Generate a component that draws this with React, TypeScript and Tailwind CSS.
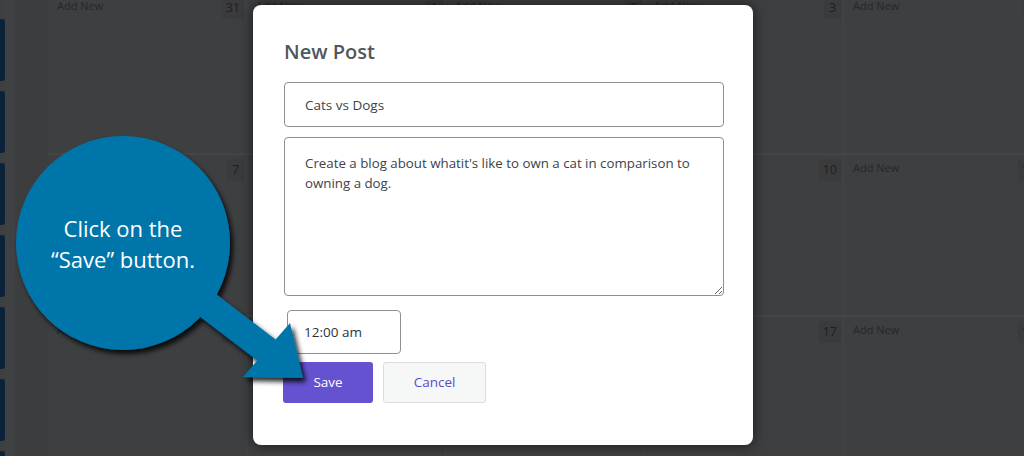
import React from "react";

const rows = [
  ["31", "1", "2", "3", "4"],
  ["7", "8", "9", "10", "11"],
  ["14", "15", "16", "17", "18"],
];

function Cell({ day }: { day: string }) {
  return (
    <div className="w-[199px] shrink-0 border-r border-[#444547] flex items-start justify-between pl-[9px] pr-[2px] pt-[4px]">
      <span className="text-[11px] leading-[18px] text-[#26272a]">Add New</span>
      <span className="min-w-[17px] h-[22px] px-[4px] bg-[#3a3b3d] text-[12.5px] leading-[22px] text-center text-[#1f2022]">
        {day}
      </span>
    </div>
  );
}

export default function App() {
  return (
    <div className="relative w-[1024px] h-[456px] overflow-hidden bg-[#3e3f41] font-['Open_Sans',sans-serif]">
      {/* background calendar */}
      <div className="flex h-full">
        <div className="w-[5px] shrink-0 flex flex-col gap-[10px] pt-[19px]">
          {[0, 1, 2, 3, 4, 5, 6].map((i) => (
            <div key={i} className="h-[62px] shrink-0 rounded-r-[3px] bg-[#0c2238]" />
          ))}
        </div>
        <div className="w-[10px] shrink-0 bg-[#404143]" />
        <div className="w-[33px] shrink-0 bg-[#3c3d3f]" />
        <div className="flex flex-col -mt-[7px]">
          {rows.map((r, i) => (
            <div key={i} className="flex h-[162px] shrink-0 border-b-2 border-[#444547]">
              {r.map((d) => (
                <Cell key={d} day={d} />
              ))}
            </div>
          ))}
        </div>
      </div>

      {/* modal */}
      <div className="absolute left-[253px] top-[5px] w-[500px] h-[440px] bg-white rounded-[8px] shadow-[0_0_14px_rgba(0,0,0,0.6)] pl-[31px] pr-[29px] pt-[33px]">
        <h2 className="text-[20px] font-semibold leading-[28px] text-[#50575e]">New Post</h2>
        <input
          readOnly
          value="Cats vs Dogs"
          className="mt-[16px] block w-full h-[45px] border border-[#8c8f94] rounded-[4px] px-[20px] text-[13.5px] text-[#3c434a] outline-none"
        />
        <textarea
          readOnly
          value={"Create a blog about whatit's like to own a cat in comparison to owning a dog."}
          className="mt-[10px] block w-full h-[159px] border border-[#8c8f94] rounded-[4px] px-[20px] py-[15px] text-[13.3px] leading-[20px] text-[#3c434a] outline-none resize"
        />
        <input
          readOnly
          value="12:00 am"
          className="mt-[14px] ml-[3px] block w-[114px] h-[44px] border border-[#8c8f94] rounded-[4px] px-[16px] text-[13.5px] text-[#2c3338] outline-none"
        />
        <div className="mt-[8px] -ml-[1px] flex gap-[10px]">
          <button className="w-[90px] h-[41px] rounded-[3px] bg-[#6552d0] text-white text-[13.5px]">Save</button>
          <button className="w-[103px] h-[41px] rounded-[3px] bg-[#f6f7f7] border border-[#dcdcde] text-[#5b49d1] text-[13.5px]">
            Cancel
          </button>
        </div>
      </div>

      {/* callout annotation */}
      <div className="absolute inset-0 pointer-events-none">
        <svg className="absolute left-0 top-0" width="1024" height="456">
          <defs>
            <filter id="sh" x="-20%" y="-20%" width="140%" height="140%">
              <feDropShadow dx="3" dy="4" stdDeviation="2.5" floodColor="#000" floodOpacity="0.85" />
            </filter>
          </defs>
          <g filter="url(#sh)" fill="#0074aa">
            <circle cx="123" cy="243" r="107" />
            <polygon points="190,274 275.6,339.6 290,323 303,378 243,377 257.2,360.6 173,296" />
          </g>
        </svg>
        <div className="absolute left-[16px] top-[213px] w-[214px] text-center text-white text-[22px] leading-[31px]">
          Click on the
          <br />
          “Save” button.
        </div>
      </div>
    </div>
  );
}
